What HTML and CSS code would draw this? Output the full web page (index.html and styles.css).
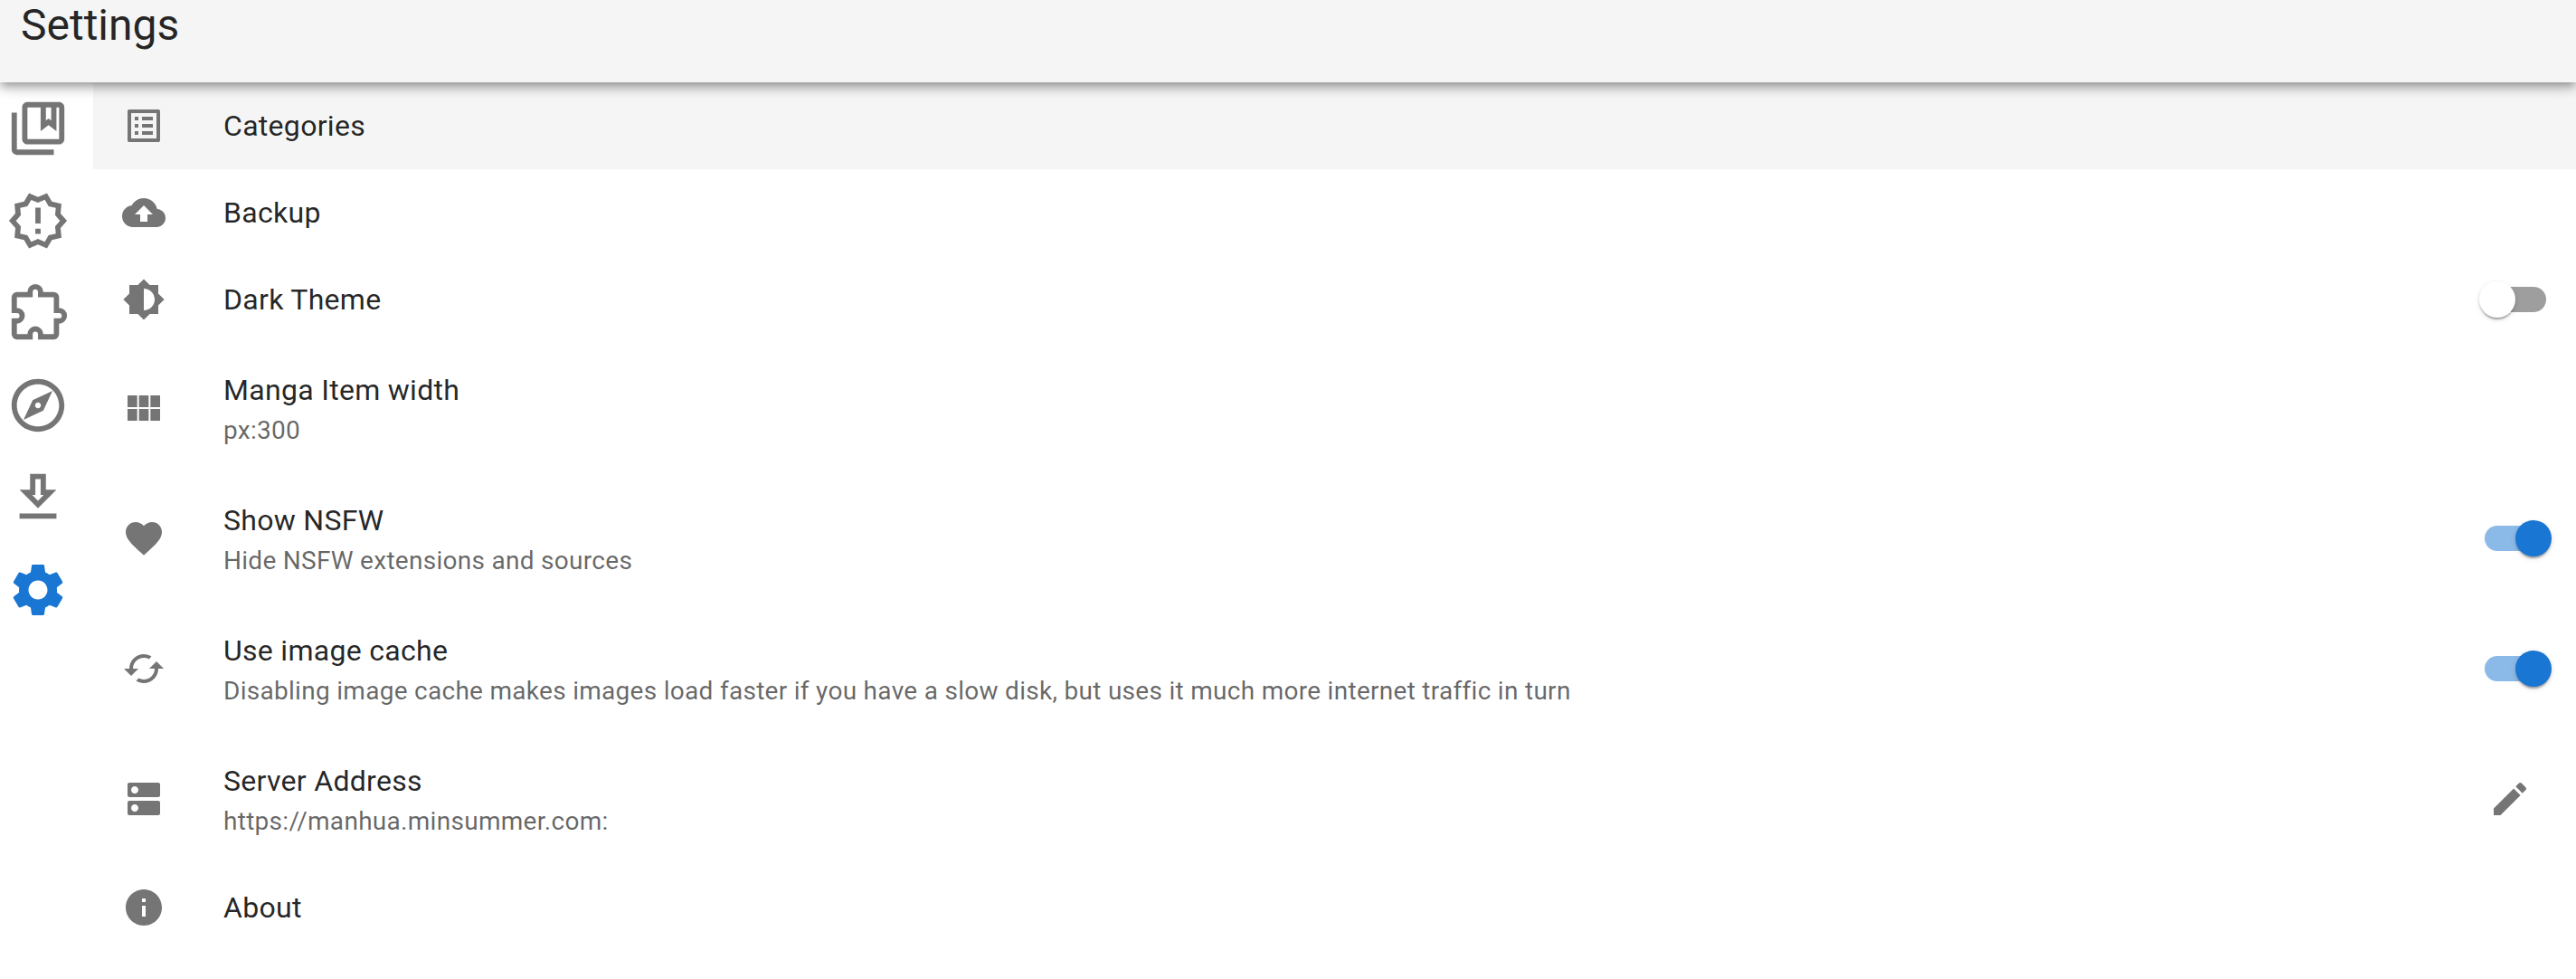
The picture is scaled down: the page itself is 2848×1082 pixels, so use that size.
FILE: index.html
```html
<!DOCTYPE html>
<html lang="en">
<head>
<meta charset="utf-8">
<title>Settings</title>
<link rel="stylesheet" href="styles.css">
</head>
<body>
<header class="app-bar"><h1 class="app-title">Settings</h1></header>
<div class="layout">
  <nav class="side-nav">
    <a class="nav-item"><svg viewBox="0 0 24 24"><path d="M4 6H2v14c0 1.1.9 2 2 2h14v-2H4V6zm16-4H8c-1.1 0-2 .9-2 2v12c0 1.1.9 2 2 2h12c1.1 0 2-.9 2-2V4c0-1.1-.9-2-2-2zm0 14H8V4h5v9l3-2.25L19 13V4h1v12zm-5-12h2v5l-1-.75L15 9V4z"/></svg></a>
    <a class="nav-item"><svg viewBox="0 0 24 24"><path d="M23 12l-2.44-2.78.34-3.68-3.61-.82-1.89-3.18L12 3 8.6 1.54 6.71 4.72l-3.61.81.34 3.68L1 12l2.44 2.78-.34 3.69 3.61.82 1.89 3.18L12 21l3.4 1.46 1.89-3.18 3.61-.82-.34-3.68L23 12zm-4.51 2.11l.26 2.79-2.74.62-1.43 2.41L12 18.82l-2.58 1.11-1.43-2.41-2.74-.62.26-2.8L3.66 12l1.85-2.12-.26-2.78 2.74-.61 1.43-2.41L12 5.18l2.58-1.11 1.43 2.41 2.74.62-.26 2.79L20.34 12l-1.85 2.11zM11 15h2v2h-2zm0-8h2v6h-2z"/></svg></a>
    <a class="nav-item"><svg viewBox="0 0 24 24"><path class="outline" d="M4 5h5V4a2 2 0 0 1 4 0v1h5a1 1 0 0 1 1 1v5h1a2 2 0 0 1 0 4h-1v5a1 1 0 0 1-1 1h-5v-1a2 2 0 0 0-4 0v1H4a1 1 0 0 1-1-1v-5h1a2 2 0 0 0 0-4H3V6a1 1 0 0 1 1-1z" transform="translate(0 0)"/></svg></a>
    <a class="nav-item"><svg viewBox="0 0 24 24"><path d="M12 2C6.48 2 2 6.48 2 12s4.48 10 10 10 10-4.48 10-10S17.52 2 12 2zm0 18c-4.41 0-8-3.59-8-8s3.59-8 8-8 8 3.59 8 8-3.59 8-8 8zm-5.5-2.5l7.51-3.49L17.5 6.5 9.99 9.99 6.5 17.5zm5.5-6.6c.61 0 1.1.49 1.1 1.1s-.49 1.1-1.1 1.1-1.1-.49-1.1-1.1.49-1.1 1.1-1.1z"/></svg></a>
    <a class="nav-item"><svg viewBox="0 0 24 24"><path d="M19 9h-4V3H9v6H5l7 7 7-7zm-8 2V5h2v6h1.17L12 13.17 9.83 11H11zm-6 7h14v2H5z"/></svg></a>
    <a class="nav-item nav-item-active"><svg viewBox="0 0 24 24"><path d="M19.14 12.94c.04-.3.06-.61.06-.94 0-.32-.02-.64-.07-.94l2.03-1.58c.18-.14.23-.41.12-.61l-1.92-3.32c-.12-.22-.37-.29-.59-.22l-2.39.96c-.5-.38-1.03-.7-1.62-.94l-.36-2.54c-.04-.24-.24-.41-.48-.41h-3.84c-.24 0-.43.17-.47.41l-.36 2.54c-.59.24-1.13.57-1.62.94l-2.39-.96c-.22-.08-.47 0-.59.22L2.74 8.87c-.12.21-.08.47.12.61l2.03 1.58c-.05.3-.09.63-.09.94s.02.64.07.94l-2.03 1.58c-.18.14-.23.41-.12.61l1.92 3.32c.12.22.37.29.59.22l2.39-.96c.5.38 1.03.7 1.62.94l.36 2.54c.05.24.24.41.48.41h3.84c.24 0 .44-.17.47-.41l.36-2.54c.59-.24 1.13-.56 1.62-.94l2.39.96c.22.08.47 0 .59-.22l1.92-3.32c.12-.22.07-.47-.12-.61l-2.01-1.58zM12 15.6c-1.98 0-3.6-1.62-3.6-3.6s1.62-3.6 3.6-3.6 3.6 1.62 3.6 3.6-1.62 3.6-3.6 3.6z"/></svg></a>
  </nav>
  <main class="settings">
    <div class="row row-hover">
      <svg class="row-icon" viewBox="0 0 24 24"><path d="M19 5v14H5V5h14m1.1-2H3.9c-.5 0-.9.4-.9.9v16.2c0 .4.4.9.9.9h16.2c.4 0 .9-.5.9-.9V3.9c0-.5-.5-.9-.9-.9zM11 7h6v2h-6V7zm0 4h6v2h-6v-2zm0 4h6v2h-6zM7 7h2v2H7zm0 4h2v2H7zm0 4h2v2H7z"/></svg>
      <div class="row-text"><div class="primary">Categories</div></div>
    </div>
    <div class="row">
      <svg class="row-icon" viewBox="0 0 24 24"><path d="M19.35 10.04C18.67 6.59 15.64 4 12 4 9.11 4 6.6 5.64 5.35 8.04 2.34 8.36 0 10.91 0 14c0 3.31 2.69 6 6 6h13c2.76 0 5-2.24 5-5 0-2.64-2.05-4.78-4.65-4.96zM14 13v4h-4v-4H7l5-5 5 5h-3z"/></svg>
      <div class="row-text"><div class="primary">Backup</div></div>
    </div>
    <div class="row">
      <svg class="row-icon" viewBox="0 0 24 24"><path d="M20 15.31L23.31 12 20 8.69V4h-4.69L12 .69 8.69 4H4v4.69L.69 12 4 15.31V20h4.69L12 23.31 15.31 20H20v-4.69zM12 18V6c3.31 0 6 2.69 6 6s-2.69 6-6 6z"/></svg>
      <div class="row-text"><div class="primary">Dark Theme</div></div>
      <div class="switch"><span class="thumb"></span></div>
    </div>
    <div class="row row-tall">
      <svg class="row-icon" viewBox="0 0 24 24"><path d="M3 5h5.33v6.5H3zM9.33 5h5.34v6.5H9.33zM15.67 5H21v6.5h-5.33zM3 12.5h5.33V19H3zM9.33 12.5h5.34V19H9.33zM15.67 12.5H21V19h-5.33z"/></svg>
      <div class="row-text"><div class="primary">Manga Item width</div><div class="secondary">px:300</div></div>
    </div>
    <div class="row row-tall">
      <svg class="row-icon" viewBox="0 0 24 24"><path d="M12 21.35l-1.45-1.32C5.4 15.36 2 12.28 2 8.5 2 5.42 4.42 3 7.5 3c1.74 0 3.41.81 4.5 2.09C13.09 3.81 14.76 3 16.5 3 19.58 3 22 5.42 22 8.5c0 3.78-3.4 6.86-8.55 11.54L12 21.35z"/></svg>
      <div class="row-text"><div class="primary">Show NSFW</div><div class="secondary">Hide NSFW extensions and sources</div></div>
      <div class="switch switch-on"><span class="thumb"></span></div>
    </div>
    <div class="row row-tall">
      <svg class="row-icon" viewBox="0 0 24 24"><path d="M19 8l-4 4h3c0 3.31-2.69 6-6 6-1.01 0-1.97-.25-2.8-.7l-1.46 1.46C8.97 19.54 10.43 20 12 20c4.42 0 8-3.58 8-8h3l-4-4zM6 12c0-3.31 2.69-6 6-6 1.01 0 1.97.25 2.8.7l1.46-1.46C15.03 4.46 13.57 4 12 4c-4.42 0-8 3.58-8 8H1l4 4 4-4H6z"/></svg>
      <div class="row-text"><div class="primary">Use image cache</div><div class="secondary">Disabling image cache makes images load faster if you have a slow disk, but uses it much more internet traffic in turn</div></div>
      <div class="switch switch-on"><span class="thumb"></span></div>
    </div>
    <div class="row row-tall">
      <svg class="row-icon" viewBox="0 0 24 24"><path d="M20 13H4c-.55 0-1 .45-1 1v6c0 .55.45 1 1 1h16c.55 0 1-.45 1-1v-6c0-.55-.45-1-1-1zM7 19c-1.1 0-2-.9-2-2s.9-2 2-2 2 .9 2 2-.9 2-2 2zM20 3H4c-.55 0-1 .45-1 1v6c0 .55.45 1 1 1h16c.55 0 1-.45 1-1V4c0-.55-.45-1-1-1zM7 9c-1.1 0-2-.9-2-2s.9-2 2-2 2 .9 2 2-.9 2-2 2z"/></svg>
      <div class="row-text"><div class="primary">Server Address</div><div class="secondary">https://manhua.minsummer.com:</div></div>
      <svg class="edit-icon" viewBox="0 0 24 24"><path d="M3 17.25V21h3.75L17.81 9.94l-3.75-3.75L3 17.25zM20.71 7.04c.39-.39.39-1.02 0-1.41l-2.34-2.34c-.39-.39-1.02-.39-1.41 0l-1.83 1.83 3.75 3.75 1.83-1.83z"/></svg>
    </div>
    <div class="row">
      <svg class="row-icon" viewBox="0 0 24 24"><path d="M12 2C6.48 2 2 6.48 2 12s4.48 10 10 10 10-4.48 10-10S17.52 2 12 2zm1 15h-2v-6h2v6zm0-8h-2V7h2v2z"/></svg>
      <div class="row-text"><div class="primary">About</div></div>
    </div>
  </main>
</div>
</body>
</html>
```
FILE: styles.css
```css
* { box-sizing: border-box; }

body {
  margin: 0;
  height: 1082px;
  overflow: hidden;
  background: #fff;
  color: rgba(0, 0, 0, 0.87);
  font-family: Roboto, "Liberation Sans", sans-serif;
}

svg { display: block; fill: currentColor; }

.app-bar {
  position: relative;
  z-index: 1;
  height: 91px;
  padding-left: 23px;
  background: #f5f5f5;
  box-shadow: 0 4px 8px -2px rgba(0, 0, 0, 0.23),
    0 8px 10px 0 rgba(0, 0, 0, 0.16),
    0 2px 20px 0 rgba(0, 0, 0, 0.12);
}

.app-title {
  margin: 0;
  font-size: 48px;
  font-weight: 400;
  line-height: 56px;
}

.layout { display: flex; }

.side-nav {
  flex: none;
  width: 103px;
  padding-left: 7px;
  color: #757575;
}

.nav-item { display: block; padding: 16px 0; }
.nav-item svg { width: 70px; height: 70px; }
.nav-item-active { color: #1976d2; }
.outline { fill: none; stroke: currentColor; stroke-width: 2; }

.settings { flex: 1; }

.row {
  display: flex;
  align-items: center;
  height: 96px;
  padding: 0 9px 0 32px;
}

.row-tall { height: 144px; }
.row-hover { background: #f5f5f5; }

.row-icon {
  flex: none;
  width: 48px;
  height: 48px;
  margin-right: 64px;
  color: #757575;
}

.row-text { flex: 1; }

.primary {
  font-size: 32px;
  line-height: 48px;
  letter-spacing: 0.00938em;
}

.secondary {
  height: 40px;
  color: rgba(0, 0, 0, 0.6);
  font-size: 28px;
  line-height: 42px;
  letter-spacing: 0.0102em;
}

.switch {
  display: flex;
  align-items: center;
  width: 68px;
  height: 28px;
  margin-right: 24px;
  border-radius: 14px;
  background: #9e9e9e;
}

.thumb {
  flex: none;
  width: 40px;
  height: 40px;
  margin-left: -6px;
  border-radius: 50%;
  background: #fff;
  box-shadow: 0 4px 2px -2px rgba(0, 0, 0, 0.2),
    0 2px 2px 0 rgba(0, 0, 0, 0.14),
    0 2px 6px 0 rgba(0, 0, 0, 0.12);
}

.switch-on { background: #8cbae8; }
.switch-on .thumb { margin-left: 34px; background: #1976d2; }

.edit-icon {
  width: 48px;
  height: 48px;
  margin-right: 40px;
  color: #757575;
}
```
